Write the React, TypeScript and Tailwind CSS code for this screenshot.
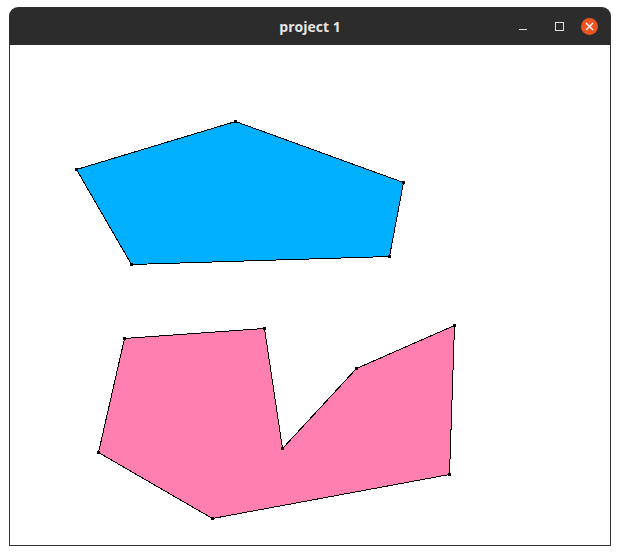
import React from "react";

const blue: [number, number][] = [
  [76, 169],
  [235, 121],
  [403, 182],
  [389, 256],
  [131, 264],
];
const pink: [number, number][] = [
  [124, 338],
  [264, 328],
  [282, 448],
  [356, 368],
  [454, 325],
  [449, 474],
  [212, 518],
  [98, 452],
];

function Poly({ pts, fill }: { pts: [number, number][]; fill: string }) {
  return (
    <g>
      <polygon
        points={pts.map((p) => `${p[0] + 0.5},${p[1] + 0.5}`).join(" ")}
        fill={fill}
        stroke="#000"
        strokeWidth={1}
        shapeRendering="crispEdges"
      />
      {pts.map((p, i) => (
        <rect key={i} x={p[0] - 1} y={p[1] - 1} width={3} height={3} fill="#000" />
      ))}
    </g>
  );
}

export default function App() {
  return (
    <div className="w-[620px] h-[555px] bg-white pt-[7px] pl-[9px]">
      <div className="w-[602px] h-[539px] flex flex-col">
        <div className="h-[38px] bg-[#2c2c2c] rounded-t-[9px] flex items-center relative">
          <div
            className="flex-1 text-center text-[14px] font-bold text-[#e4e4e4] pt-[1px]"
            style={{ fontFamily: "'Open Sans', 'DejaVu Sans', sans-serif" }}
          >
            project 1
          </div>
          <div className="absolute right-0 top-0 h-[38px] flex items-center">
            <div className="w-[36px] flex justify-center items-center">
              <div className="w-[8px] h-[1px] bg-[#e0e0e0] mt-[6px]" />
            </div>
            <div className="w-[36px] flex justify-center items-center">
              <div className="w-[9px] h-[9px] border border-[#e0e0e0]" />
            </div>
            <div className="w-[34px] pr-[9px] flex justify-center items-center">
              <div className="w-[17px] h-[17px] rounded-full bg-[#e95420] flex items-center justify-center">
                <svg width="9" height="9" viewBox="0 0 9 9">
                  <path d="M1 1L8 8M8 1L1 8" stroke="#fff" strokeWidth="1.4" />
                </svg>
              </div>
            </div>
          </div>
        </div>
        <div className="flex-1 bg-white border-x border-b border-[#333]">
          <svg width="600" height="500" viewBox="10 45 600 500" className="block">
            <Poly pts={blue} fill="#00b0ff" />
            <Poly pts={pink} fill="#ff80b0" />
          </svg>
        </div>
      </div>
    </div>
  );
}
